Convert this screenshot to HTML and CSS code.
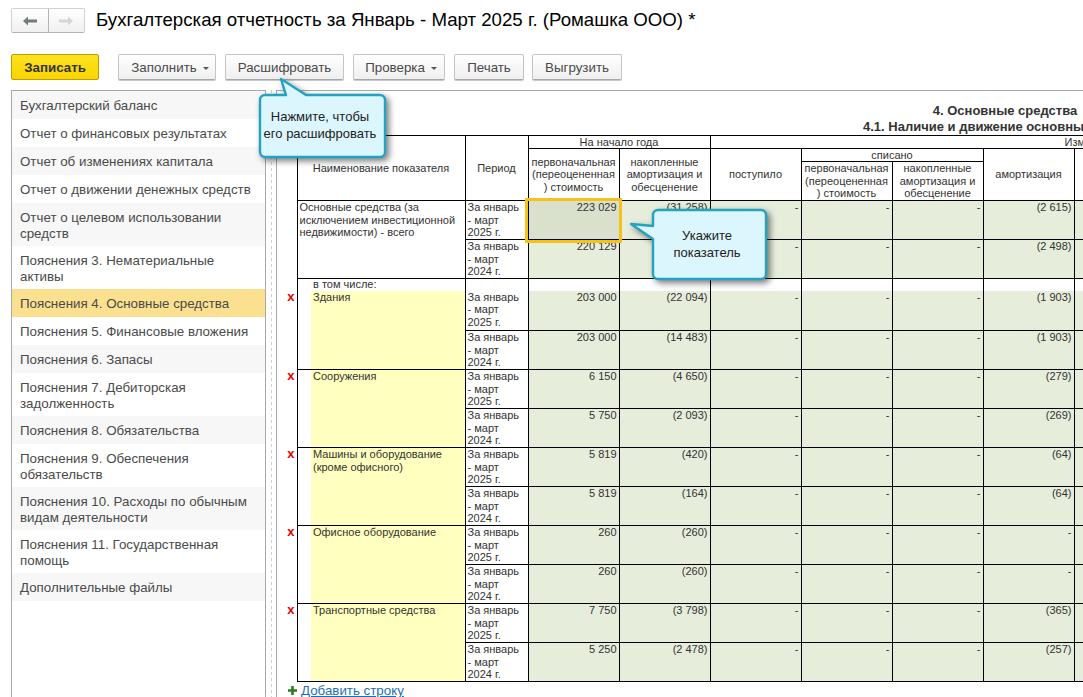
FILE: index.html
```html
<!DOCTYPE html>
<html lang="ru">
<head>
<meta charset="utf-8">
<title>Бухгалтерская отчетность</title>
<link rel="stylesheet" href="styles.css">
</head>
<body>
<header class="head">
  <div class="nav">
    <button class="nav-btn"><svg width="14" height="10" viewBox="0 0 14 10"><path d="M0 5 5 0.5V3.5H14V6.5H5V9.5Z" fill="#6f7f77"/></svg></button>
    <button class="nav-btn"><svg width="14" height="10" viewBox="0 0 14 10"><path d="M14 5 9 0.5V3.5H0V6.5H9V9.5Z" fill="#d2d7d4"/></svg></button>
  </div>
  <h1 class="title">Бухгалтерская отчетность за Январь - Март 2025 г. (Ромашка ООО) *</h1>
</header>
<div class="toolbar">
  <button class="btn save">Записать</button>
  <button class="btn w-fill">Заполнить<i class="caret"></i></button>
  <button class="btn w-dec">Расшифровать</button>
  <button class="btn w-chk">Проверка<i class="caret"></i></button>
  <button class="btn w-prn">Печать</button>
  <button class="btn w-exp">Выгрузить</button>
</div>
<main class="main">
  <ul class="side">
    <li>Бухгалтерский баланс</li>
    <li>Отчет о финансовых результатах</li>
    <li>Отчет об изменениях капитала</li>
    <li>Отчет о движении денежных средств</li>
    <li class="two">Отчет о целевом использовании средств</li>
    <li class="two">Пояснения 3. Нематериальные активы</li>
    <li class="sel">Пояснения 4. Основные средства</li>
    <li>Пояснения 5. Финансовые вложения</li>
    <li>Пояснения 6. Запасы</li>
    <li class="two">Пояснения 7. Дебиторская задолженность</li>
    <li>Пояснения 8. Обязательства</li>
    <li class="two">Пояснения 9. Обеспечения обязательств</li>
    <li class="two">Пояснения 10. Расходы по обычным видам деятельности</li>
    <li class="two">Пояснения 11. Государственная помощь</li>
    <li>Дополнительные файлы</li>
  </ul>
  <div class="split"></div>
  <section class="content">
    <div class="sheet">
      <div class="caption">4. Основные средства<br>4.1. Наличие и движение основных средств</div>
      <table class="grid">
        <colgroup>
          <col class="c-gut"><col class="c-blank"><col class="c-name"><col class="c-per">
          <col class="c-n"><col class="c-n"><col class="c-n"><col class="c-n"><col class="c-n"><col class="c-n"><col class="c-n"><col class="c-rest">
        </colgroup>
        <thead>
          <tr class="h13">
            <th class="gut" rowspan="3"></th>
            <th colspan="2" rowspan="3">Наименование показателя</th>
            <th rowspan="3">Период</th>
            <th colspan="2">На начало года</th>
            <th colspan="6">Изменения за период</th>
          </tr>
          <tr class="h13">
            <th rowspan="2">первоначальная (переоцененная ) стоимость</th>
            <th rowspan="2">накопленные амортизация и обесценение</th>
            <th rowspan="2">поступило</th>
            <th colspan="2">списано</th>
            <th rowspan="2">амортизация</th>
            <th rowspan="2"></th>
            <th rowspan="2"></th>
          </tr>
          <tr class="h39">
            <th>первоначальная (переоцененная ) стоимость</th>
            <th>накопленные амортизация и обесценение</th>
          </tr>
        </thead>
        <tbody>
          <tr class="h39">
            <td class="gut" rowspan="2"></td>
            <td class="name" colspan="2" rowspan="2">Основные средства (за исключением инвестиционной недвижимости) - всего</td>
            <td class="per">За январь - март 2025 г.</td>
            <td class="num picked">223 029</td><td class="num">(31 258)</td><td class="num">-</td><td class="num">-</td><td class="num">-</td><td class="num">(2 615)</td><td class="num">-</td><td class="num"></td>
          </tr>
          <tr class="h39">
            <td class="per">За январь - март 2024 г.</td>
            <td class="num">220 129</td><td class="num">(27 100)</td><td class="num">-</td><td class="num">-</td><td class="num">-</td><td class="num">(2 498)</td><td class="num">-</td><td class="num"></td>
          </tr>
          <tr class="sub">
            <td class="gut"></td>
            <td class="blank"></td><td class="plain">в том числе:</td>
            <td></td><td></td><td></td><td></td><td></td><td></td><td></td><td></td><td></td>
          </tr>
          <tr class="top-open">
            <td class="gut" rowspan="2"><b class="del">x</b></td>
            <td class="blank" rowspan="2"></td><td class="yel" rowspan="2">Здания</td>
            <td class="per">За январь - март 2025 г.</td>
            <td class="num">203 000</td><td class="num">(22 094)</td><td class="num">-</td><td class="num">-</td><td class="num">-</td><td class="num">(1 903)</td><td class="num">-</td><td class="num"></td>
          </tr>
          <tr class="h39">
            <td class="per">За январь - март 2024 г.</td>
            <td class="num">203 000</td><td class="num">(14 483)</td><td class="num">-</td><td class="num">-</td><td class="num">-</td><td class="num">(1 903)</td><td class="num">-</td><td class="num"></td>
          </tr>
          <tr class="h39">
            <td class="gut" rowspan="2"><b class="del">x</b></td>
            <td class="blank" rowspan="2"></td><td class="yel" rowspan="2">Сооружения</td>
            <td class="per">За январь - март 2025 г.</td>
            <td class="num">6 150</td><td class="num">(4 650)</td><td class="num">-</td><td class="num">-</td><td class="num">-</td><td class="num">(279)</td><td class="num">-</td><td class="num"></td>
          </tr>
          <tr class="h39">
            <td class="per">За январь - март 2024 г.</td>
            <td class="num">5 750</td><td class="num">(2 093)</td><td class="num">-</td><td class="num">-</td><td class="num">-</td><td class="num">(269)</td><td class="num">-</td><td class="num"></td>
          </tr>
          <tr class="h39">
            <td class="gut" rowspan="2"><b class="del">x</b></td>
            <td class="blank" rowspan="2"></td><td class="yel" rowspan="2">Машины и оборудование (кроме офисного)</td>
            <td class="per">За январь - март 2025 г.</td>
            <td class="num">5 819</td><td class="num">(420)</td><td class="num">-</td><td class="num">-</td><td class="num">-</td><td class="num">(64)</td><td class="num">-</td><td class="num"></td>
          </tr>
          <tr class="h39">
            <td class="per">За январь - март 2024 г.</td>
            <td class="num">5 819</td><td class="num">(164)</td><td class="num">-</td><td class="num">-</td><td class="num">-</td><td class="num">(64)</td><td class="num">-</td><td class="num"></td>
          </tr>
          <tr class="h39">
            <td class="gut" rowspan="2"><b class="del">x</b></td>
            <td class="blank" rowspan="2"></td><td class="yel" rowspan="2">Офисное оборудование</td>
            <td class="per">За январь - март 2025 г.</td>
            <td class="num">260</td><td class="num">(260)</td><td class="num">-</td><td class="num">-</td><td class="num">-</td><td class="num">-</td><td class="num">-</td><td class="num"></td>
          </tr>
          <tr class="h39">
            <td class="per">За январь - март 2024 г.</td>
            <td class="num">260</td><td class="num">(260)</td><td class="num">-</td><td class="num">-</td><td class="num">-</td><td class="num">-</td><td class="num">-</td><td class="num"></td>
          </tr>
          <tr class="h39">
            <td class="gut" rowspan="2"><b class="del">x</b></td>
            <td class="blank" rowspan="2"></td><td class="yel" rowspan="2">Транспортные средства</td>
            <td class="per">За январь - март 2025 г.</td>
            <td class="num">7 750</td><td class="num">(3 798)</td><td class="num">-</td><td class="num">-</td><td class="num">-</td><td class="num">(365)</td><td class="num">-</td><td class="num"></td>
          </tr>
          <tr class="h39">
            <td class="per">За январь - март 2024 г.</td>
            <td class="num">5 250</td><td class="num">(2 478)</td><td class="num">-</td><td class="num">-</td><td class="num">-</td><td class="num">(257)</td><td class="num">-</td><td class="num"></td>
          </tr>
        </tbody>
      </table>
      <div class="add"><svg width="9" height="9" viewBox="0 0 9 9"><path d="M3.2 0H5.8V3.2H9V5.8H5.8V9H3.2V5.8H0V3.2H3.2Z" fill="#2e7d1e"/></svg><a class="add-link" href="#">Добавить строку</a></div>
    </div>
  </section>
</main>
<div class="callout c1">
  <svg class="bubble" width="140" height="90" viewBox="0 0 140 90"><path d="M10 21H27L22 5 47 21H121a5 5 0 0 1 5 5V78a5 5 0 0 1-5 5H6a5 5 0 0 1-5-5V26a5 5 0 0 1 5-5Z" fill="#dcf6fd" stroke="#22a3c1" stroke-width="2.4" stroke-linejoin="round"/></svg>
  <div class="c-text">Нажмите, чтобы<br>его расшифровать</div>
</div>
<div class="callout c2">
  <svg class="bubble" width="150" height="85" viewBox="0 0 150 85"><path d="M28 1H131a5 5 0 0 1 5 5V65a5 5 0 0 1-5 5H28a5 5 0 0 1-5-5V30L1 15 23 17V6a5 5 0 0 1 5-5Z" fill="#dcf6fd" stroke="#22a3c1" stroke-width="2.4" stroke-linejoin="round"/></svg>
  <div class="c-text">Укажите<br>показатель</div>
</div>
</body>
</html>
```

FILE: styles.css
```css
* { box-sizing: border-box; }
html, body { margin: 0; height: 697px; overflow: hidden; background: #fff; }
body { font-family: "Liberation Sans", Arial, sans-serif; position: relative; color: #333; display: flex; flex-direction: column; }

.head { display: flex; align-items: flex-start; height: 40px; padding: 8px 0 0 11px; flex: none; }
.nav { display: flex; width: 74px; height: 25px; border: 1px solid #d2d2d2; border-bottom-color: #b5b5b5; border-radius: 2px; background: linear-gradient(#fff, #f0f0f0); }
.nav-btn { flex: 1; padding: 0; border: 0; background: none; display: flex; align-items: center; justify-content: center; }
.nav-btn + .nav-btn { border-left: 1px solid #b4b4b4; }
.title { margin: 0 0 0 11px; font-size: 18.67px; font-weight: 400; color: #000; white-space: nowrap; line-height: 24px; }

.toolbar { display: flex; height: 27px; margin-top: 14px; padding-left: 11px; flex: none; }
.btn { height: 26px; padding: 0; margin-right: 9px; font: 13.33px "Liberation Sans", Arial, sans-serif; color: #4a4a4a; border: 1px solid #c4c4c4; border-bottom-color: #a6a6a6; border-radius: 2px; background: linear-gradient(#fff, #efefef); box-shadow: 0 1px 0 #c8c8c8; display: flex; align-items: center; justify-content: center; }
.save { width: 88px; margin-right: 19px; font-weight: 700; color: #333; background: linear-gradient(#ffe21f, #f9d500); border-color: #b9a000; box-shadow: none; }
.w-fill { width: 98px; padding-left: 6px; }
.w-dec { width: 119px; }
.w-chk { width: 92px; padding-left: 4px; }
.w-prn { width: 70px; margin-right: 8px; }
.w-exp { width: 90px; }
.caret { width: 0; height: 0; margin: 2px 0 0 6px; border: 3px solid transparent; border-top-color: #555; border-bottom: 0; }

.main { flex: 1; min-height: 0; margin-top: 9px; display: flex; padding-left: 11px; }
.side { width: 255px; margin: 0; padding: 0; list-style: none; border: 1px solid #a8a8a8; border-bottom: 0; font-size: 13.33px; line-height: 16px; color: #4a4a4a; flex: none; }
.side li { padding: 7px 8px 5px 8px; }
.side li.two { padding-bottom: 4px; }
.side li:nth-child(odd) { background: #f7f7f7; }
.side li.sel { background: #fbe08f; }
.split { width: 10px; flex: none; background: repeating-linear-gradient(#cfcfcf 0 3px, transparent 3px 6px) 5px 0 / 1px 100% no-repeat; }
.content { flex: 1; min-width: 0; overflow: hidden; border-top: 1px solid #a8a8a8; border-left: 1px solid #a8a8a8; }
.sheet { width: 1456px; }
.caption { height: 44px; padding-top: 12px; font-size: 13px; line-height: 16px; font-weight: 700; text-align: center; color: #333; }

.grid { border-collapse: collapse; table-layout: fixed; width: 1233px; font-size: 11px; line-height: 12.66px; color: #333; }
.c-gut { width: 20px; }
.c-blank { width: 14px; }
.c-name { width: 154px; }
.c-per { width: 63px; }
.c-n { width: 91px; }
.c-rest { width: 365px; }
.grid th, .grid td { padding: 0 2px; border: 1px solid #000; vertical-align: top; overflow: hidden; }
.grid th { font-weight: 400; text-align: center; vertical-align: middle; }
.h13 { height: 13px; }
.h39 { height: 39px; }
.h13 th { line-height: 12px; }
.h13 th[rowspan] { line-height: 12.66px; }
.grid .gut { border: 0; border-right: 1px solid #000; padding: 0 2px 0 0; text-align: right; }
.del { color: #e60000; font-size: 13px; }
.grid .blank { border-right: 0; }
.grid .yel { border-left: 0; background: #ffffc0; padding-left: 2px; }
.grid .plain { border-left: 0; padding-left: 2px; }
.sub { height: 12px; }
.grid .sub td { border-bottom: 0; line-height: 11px; overflow: visible; white-space: nowrap; }
.grid .sub td.gut { border-top: 0; }
.top-open { height: 40px; }
.grid .top-open td { border-top: 0; }
.grid .num { text-align: right; background: #e6eddb; padding: 0 2px 0 0; }
.grid .picked { background: #d9e1cd; outline: 3px solid #f6c21a; outline-offset: 0; position: relative; }

.add { display: flex; align-items: center; height: 16px; padding: 1px 0 0 11px; gap: 4px; }
.add-link { font-size: 13.33px; color: #1b6fb8; }

.callout { position: absolute; }
.bubble { position: absolute; left: 0; top: 0; overflow: visible; filter: drop-shadow(3px 3px 3px rgba(0,0,0,.5)); }
.c-text { position: absolute; text-align: center; font-size: 13px; line-height: 17px; color: #222; }
.c1 { left: 259px; top: 74px; width: 127px; height: 84px; }
.c1 .c-text { left: 0; width: 122px; top: 34px; }
.c2 { left: 630px; top: 209px; width: 137px; height: 71px; }
.c2 .c-text { left: 22px; width: 110px; top: 18px; }
```
